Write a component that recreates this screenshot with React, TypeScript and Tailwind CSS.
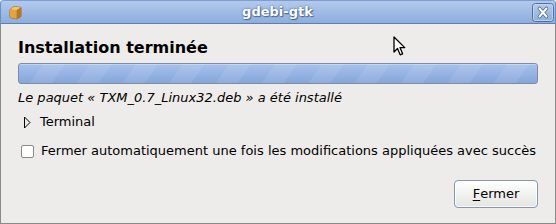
import React from "react";

function PackageIcon() {
  return (
    <svg width="15" height="15" viewBox="0 0 15 15" aria-hidden>
      <path d="M2 4.5 L6 1.5 L13 2.5 L13 11.5 L8.5 14 L2 12.5 Z" fill="#c98a2c" stroke="#8a5a14" strokeWidth="0.8" />
      <path d="M2 4.5 L6 1.5 L13 2.5 L8.5 5.2 Z" fill="#f2c46a" />
      <path d="M8.5 5.2 L13 2.5 L13 11.5 L8.5 14 Z" fill="#b87820" />
      <path d="M2 4.5 L8.5 5.2 L8.5 14 L2 12.5 Z" fill="#e0a444" />
    </svg>
  );
}

function CloseButton() {
  return (
    <svg width="22" height="19" viewBox="0 0 22 19" aria-hidden>
      <defs>
        <linearGradient id="cb" x1="0" y1="0" x2="0" y2="1">
          <stop offset="0" stopColor="#b6cbeb" />
          <stop offset="1" stopColor="#8eaddc" />
        </linearGradient>
      </defs>
      <rect x="0.5" y="0.5" width="21" height="18" rx="3" fill="url(#cb)" stroke="#4f6f9f" />
      <rect x="1.5" y="1.5" width="19" height="16" rx="2" fill="none" stroke="#c9d8f0" strokeWidth="0.8" />
      <path d="M7.5 5.5 L14.5 13.5 M14.5 5.5 L7.5 13.5" stroke="#4a6a9a" strokeWidth="3.6" strokeLinecap="round" />
      <path d="M7.5 5.5 L14.5 13.5 M14.5 5.5 L7.5 13.5" stroke="#ffffff" strokeWidth="2" strokeLinecap="round" />
    </svg>
  );
}

function Cursor() {
  return (
    <svg width="14" height="21" viewBox="0 0 14 21" aria-hidden>
      <path
        d="M1 1 L1 16 L4.5 12.5 L7.2 18.8 L9.6 17.8 L7 11.6 L11.8 11.6 Z"
        fill="#ffffff"
        stroke="#000000"
        strokeWidth="1.3"
        strokeLinejoin="round"
      />
    </svg>
  );
}

export default function App() {
  return (
    <div
      className="relative flex h-[224px] w-[556px] flex-col overflow-hidden bg-[#edeceb] text-[13px] text-[#1a1a1a]"
      style={{ fontFamily: '"DejaVu Sans", "Liberation Sans", sans-serif' }}
    >
      <div className="flex h-[24px] shrink-0 items-center justify-between rounded-t-[4px] border border-b-[#5f7fb2] border-l-[#6f8fc4] border-r-[#6f8fc4] border-t-[#7f9ed0] bg-[linear-gradient(to_bottom,#b2c9ec,#8eaedd)] pl-[7px] pr-[1px]">
        <PackageIcon />
        <span className="text-[13px] font-bold text-white [text-shadow:0_0_2px_#3c5a8a,1px_1px_1px_#4b6a9c]">
          gdebi-gtk
        </span>
        <CloseButton />
      </div>

      <div className="flex flex-1 flex-col border-x border-b border-[#8a8a8a] pl-[17px] pr-[17px] pt-[14px]">
        <h1 className="text-[16px] font-bold leading-[20px] text-black">Installation terminée</h1>

        <div className="mt-[5px] h-[21px] w-[520px] rounded-[3px] border border-[#7f8da3] bg-[repeating-linear-gradient(125deg,rgba(255,255,255,0)_0px,rgba(255,255,255,0)_20px,rgba(255,255,255,0.08)_20px,rgba(255,255,255,0.08)_38px),linear-gradient(to_bottom,#a6c2ec,#86a6da)] shadow-[inset_0_1px_0_rgba(255,255,255,0.3)]" />

        <p className="mt-[6px] text-[13px] italic leading-[16px] text-black">
          Le paquet « TXM_0.7_Linux32.deb » a été installé
        </p>

        <div className="mt-[8px] flex items-center leading-[16px]">
          <svg width="22" height="13" viewBox="0 0 22 13" aria-hidden>
            <path d="M6.5 1 L12 6.5 L6.5 12 Z" fill="none" stroke="#000" strokeWidth="1" strokeLinejoin="miter" />
          </svg>
          <span className="text-black">Terminal</span>
        </div>

        <label className="mt-[13px] flex items-center leading-[16px]">
          <span className="ml-[3px] mr-[7px] block h-[13px] w-[13px] rounded-[2px] border border-[#8a8a8a] bg-white" />
          <span className="text-black">Fermer automatiquement une fois les modifications appliquées avec succès</span>
        </label>

        <div className="mt-[21px] flex justify-end">
          <button
            type="button"
            className="flex h-[28px] w-[84px] items-center justify-center rounded-[4px] border border-[#8796ad] bg-[linear-gradient(to_bottom,#ffffff,#e4e4e2)] text-[13px] text-black shadow-[inset_0_0_0_1px_rgba(255,255,255,0.8)]"
          >
            <span className="underline decoration-1 underline-offset-2 [text-decoration-skip-ink:none]">F</span>ermer
          </button>
        </div>
      </div>

      <div className="absolute left-[393px] top-[36px]">
        <Cursor />
      </div>
    </div>
  );
}
